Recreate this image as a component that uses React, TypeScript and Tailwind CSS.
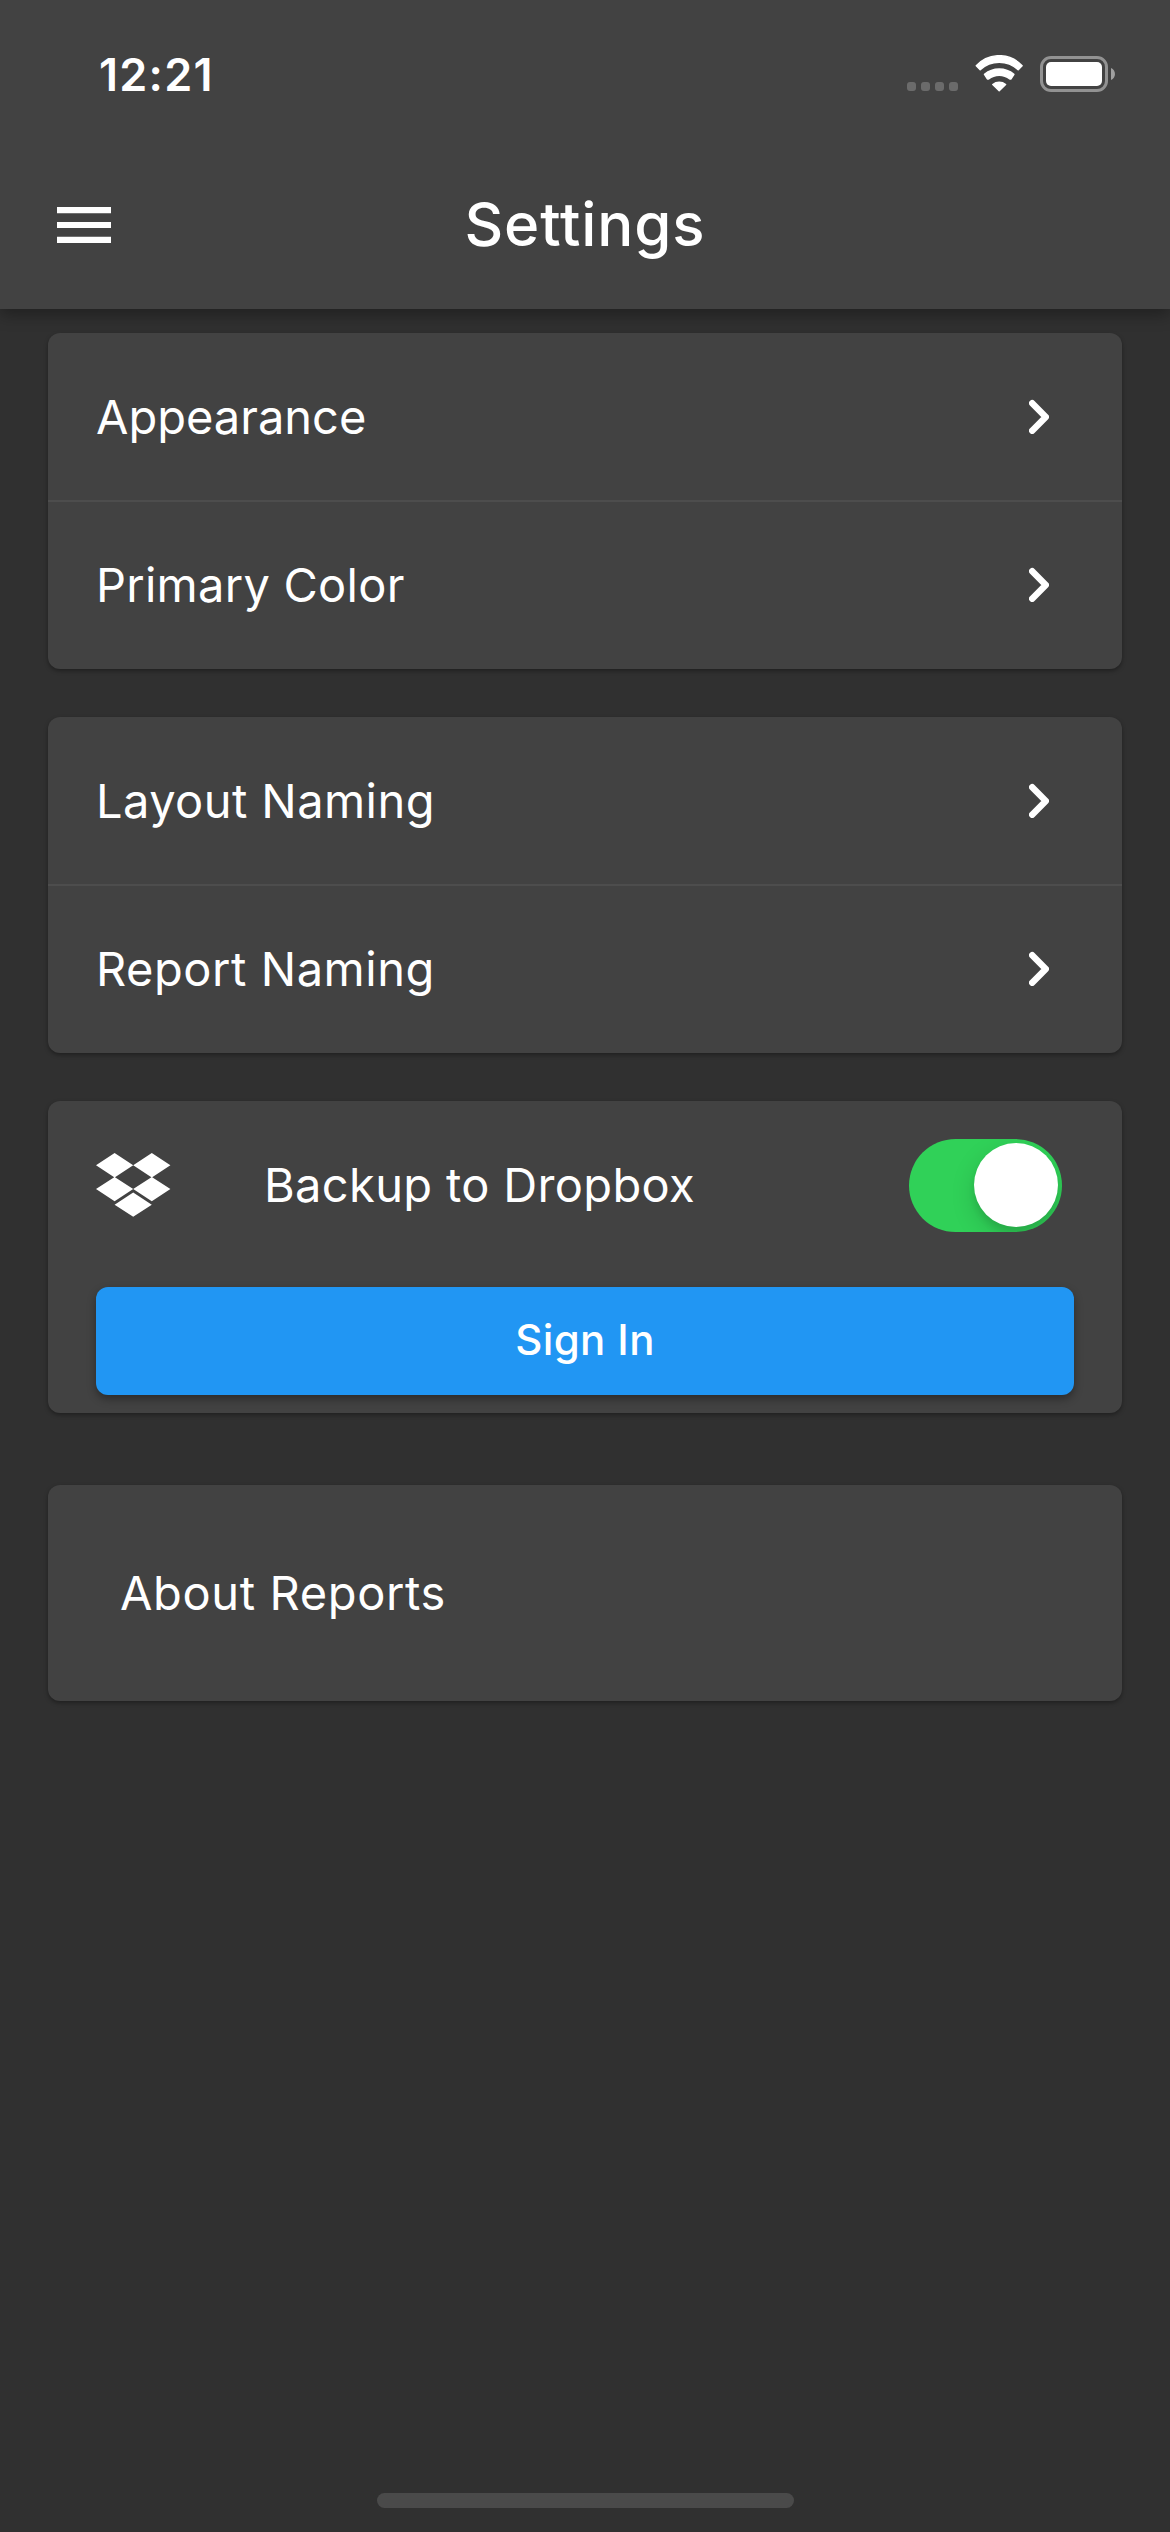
import type { ReactNode } from "react";

function StatusBar() {
  return (
    <div className="flex h-[141px] items-start justify-between pl-[99px] pr-[54px]">
      <span className="mt-[46px] text-[45px] leading-[57px] font-semibold tracking-[1.26px]">12:21</span>
      <div className="mt-[55px] flex items-start">
        <div className="mt-[27px] flex gap-[5px]">
          {[0, 1, 2, 3].map((dot) => (
            <span key={dot} className="size-[9px] rounded-[3px] bg-[#6b6b6b]" />
          ))}
        </div>
        <svg className="ml-[17px] h-[37px] w-[49px]" viewBox="0 0 49 37" fill="#fff" stroke="#fff" strokeWidth="1.5" strokeLinejoin="round">
          <path d="M1.3 10.8A31 31 0 0 1 47.1 10.8L43.2 14.8A27.8 27.8 0 0 0 5.2 14.8Z" />
          <path d="M9.5 19.4A22.9 22.9 0 0 1 38.9 19.4L36 23.9L34.8 24A17 17 0 0 0 13.6 24L12.4 23.9Z" />
          <path d="M17.8 29.5A10 10 0 0 1 30.6 29.5L24.2 35.6Z" />
        </svg>
        <div className="mt-px ml-4 flex items-center">
          <div className="h-9 w-[68px] rounded-[11px] border-3 border-[#929292] p-[3px]">
            <div className="size-full rounded-[5px] bg-white" />
          </div>
          <svg className="mr-px ml-[3px] h-3 w-1" viewBox="0 0 4 12" fill="#a0a0a0">
            <path d="M0 0C5.3 2.2 5.3 9.8 0 12Z" />
          </svg>
        </div>
      </div>
    </div>
  );
}

function Header() {
  return (
    <header className="relative z-10 bg-[#424242] shadow-[0_6px_15px_rgba(0,0,0,0.32)]">
      <StatusBar />
      <div className="grid h-[168px] grid-cols-[1fr_auto_1fr] items-center">
        <button aria-label="Menu" className="ml-[57px] w-[54px]">
          <svg className="h-9 w-[54px]" viewBox="0 0 54 36" fill="#fff">
            <path d="M0 0h54v6.2H0zM0 15h54v6H0zM0 29.8h54V36H0z" />
          </svg>
        </button>
        <h1 className="pb-0.5 text-[60px] leading-[72px] font-medium tracking-[0.9px]">Settings</h1>
      </div>
    </header>
  );
}

function Card({ children, className = "" }: { children: ReactNode; className?: string }) {
  return (
    <section className={`rounded-xl bg-[#424242] shadow-[0_2px_4px_rgba(0,0,0,0.35)] ${className}`}>{children}</section>
  );
}

function Row({ label, tracking, className = "" }: { label: string; tracking: string; className?: string }) {
  return (
    <div className={`flex h-[167px] items-center justify-between pr-[73px] pl-12 ${className}`}>
      <span className={`text-[47px] leading-[57px] ${tracking}`}>{label}</span>
      <svg className="h-[35px] w-5" viewBox="0 0 20 35" fill="none" stroke="#fff" strokeWidth="6.5" strokeLinecap="round" strokeLinejoin="round">
        <path d="M3.2 4.2L16.8 18L3.2 31.8" />
      </svg>
    </div>
  );
}

function DropboxLogo() {
  return (
    <svg className="h-16 w-[75px]" viewBox="0 0 75 64" fill="#fff">
      <path d="M18.6 0L37.2 12.2L18.6 24.4L0 12.2ZM55.8 0L74.4 12.2L55.8 24.4L37.2 12.2ZM18.6 24L37.2 36.1L18.6 48.2L0 36.1ZM55.8 24L74.4 36.1L55.8 48.2L37.2 36.1ZM37.2 39.6L55.8 51.7L37.2 63.8L18.6 51.7Z" />
    </svg>
  );
}

function Toggle() {
  return (
    <div role="switch" aria-checked="true" className="flex h-[93px] w-[153px] items-center justify-end overflow-hidden rounded-full bg-[#30d158] pr-[4.5px]">
      <div className="size-[84px] rounded-full bg-white shadow-[0_9px_24px_rgba(0,0,0,0.15),0_6px_6px_rgba(0,0,0,0.08)]" />
    </div>
  );
}

export default function App() {
  return (
    <div className="flex h-[2532px] w-[1170px] flex-col bg-[#303030] font-['Inter',sans-serif] text-white">
      <Header />
      <main className="flex flex-1 flex-col px-12 pt-6">
        <Card>
          <Row label="Appearance" tracking="tracking-normal" />
          <div className="h-0.5 bg-[#4d4d4d]" />
          <Row label="Primary Color" tracking="tracking-[0.26px]" className="pb-0.5" />
        </Card>
        <Card className="mt-12">
          <Row label="Layout Naming" tracking="tracking-[0.43px]" />
          <div className="h-0.5 bg-[#4d4d4d]" />
          <Row label="Report Naming" tracking="tracking-[0.54px]" className="pb-0.5" />
        </Card>
        <Card className="mt-12 h-[312px] px-12">
          <div className="flex h-[168px] items-center pr-3">
            <DropboxLogo />
            <span className="ml-[93px] flex-1 pb-px text-[47px] leading-[57px] tracking-[0.34px]">Backup to Dropbox</span>
            <Toggle />
          </div>
          <button className="mt-[18px] flex h-[108px] w-full items-center justify-center rounded-xl bg-[#2196f3] pb-0.5 text-[42px] leading-[50px] font-medium tracking-[0.4px] shadow-[0_4px_9px_rgba(0,0,0,0.35)]">
            Sign In
          </button>
        </Card>
        <Card className="mt-[72px] flex h-[216px] items-center px-[72px]">
          <span className="pb-px text-[47px] leading-[57px] tracking-[0.63px]">About Reports</span>
        </Card>
      </main>
      <div className="mb-6 ml-[377px] h-[15px] w-[417px] rounded-full bg-[#4a4a4a]" />
    </div>
  );
}
